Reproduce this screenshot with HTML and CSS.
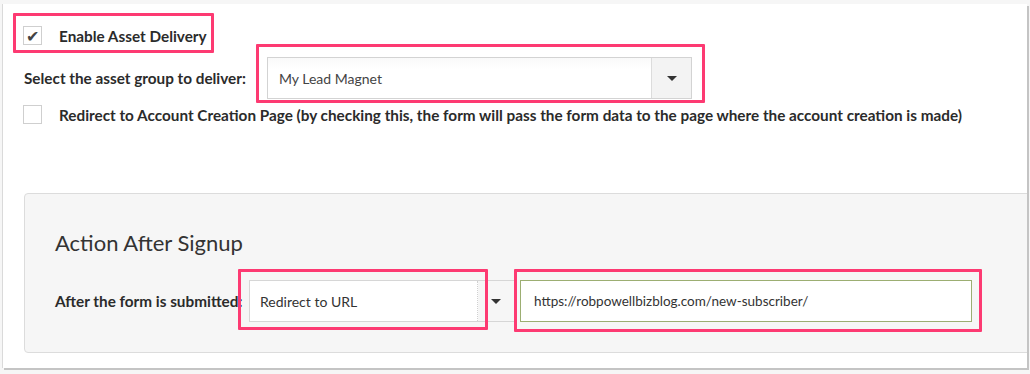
FILE: index.html
```html
<!DOCTYPE html>
<html>
<head>
<meta charset="utf-8">
<link rel="stylesheet" href="styles.css">
</head>
<body>
<div class="panel">
  <div class="row row-enable">
    <div class="hl hl-enable">
      <span class="checkbox checked">&#10004;</span>
      <span class="label">Enable Asset Delivery</span>
    </div>
  </div>
  <div class="row row-group">
    <span class="label label-group">Select the asset group to deliver:</span>
    <div class="hl hl-group">
      <div class="select select-group">
        <span class="select-value">My Lead Magnet</span>
        <span class="select-btn"><span class="caret"></span></span>
      </div>
    </div>
  </div>
  <div class="row row-redirect">
    <span class="checkbox"></span>
    <span class="label">Redirect to Account Creation Page (by checking this, the form will pass the form data to the page where the account creation is made)</span>
  </div>
  <div class="box">
    <h2 class="box-title">Action After Signup</h2>
    <div class="box-row">
      <span class="label label-after">After the form is submitted:</span>
      <div class="hl hl-action">
        <div class="select select-action">
          <span class="select-value">Redirect to URL</span>
          <span class="select-btn plain"><span class="caret"></span></span>
        </div>
      </div>
      <div class="hl hl-url">
        <div class="url-input">https://robpowellbizblog.com/new-subscriber/</div>
      </div>
    </div>
  </div>
</div>
</body>
</html>
```

FILE: styles.css
```css
* { box-sizing: border-box; }
html, body { margin: 0; padding: 0; }
body {
  background: #f6f6f6;
  font-family: "Lato", "Open Sans", sans-serif;
  color: #2e2e2e;
  width: 1030px;
  height: 374px;
  overflow: hidden;
}
.panel {
  margin: 4px 0 0 2px;
  width: 1025px;
  height: 364px;
  background: #fff;
  border-left: 1px solid #dadada;
  box-shadow: 2px 2px 0 #c4c4c4;
  padding: 22px 0 0 20px;
  overflow: hidden;
}
.row { display: flex; align-items: center; }
.label { font-size: 15.3px; font-weight: 700; color: #2b2b2b; white-space: nowrap; }
.hl { position: relative; }
.hl::after {
  content: "";
  position: absolute;
  border: 3px solid #fd3a72;
  border-radius: 1px;
  pointer-events: none;
  z-index: 2;
}
.row-enable { height: 19px; }
.hl-enable { display: flex; align-items: center; }
.hl-enable::after { left: -10px; top: -13px; right: -7px; bottom: -8px; }
.checkbox {
  width: 19px;
  height: 19px;
  border: 1px solid #cfcfcf;
  background: #fff;
  display: flex;
  align-items: center;
  justify-content: center;
  font-size: 16px;
  line-height: 1;
  color: #444;
  flex: none;
}
.checkbox + .label { margin-left: 17px; }
.row-group { margin-top: 12px; height: 42px; }
.label-group { margin-left: 1px; width: 243px; }
.hl-group::after { left: -11px; top: -13px; right: -13px; bottom: -4px; }
.select {
  display: flex;
  height: 42px;
  border: 1px solid #d3d3d3;
  background: #fff;
}
.select-group { width: 425px; }
.select-value {
  flex: 1;
  display: flex;
  align-items: center;
  padding-left: 11px;
  font-size: 14px;
  color: #444;
  background: linear-gradient(#f9f9f9, #fff 30%);
}
.select-btn {
  width: 40px;
  display: flex;
  align-items: center;
  justify-content: center;
  background: #f3f3f3;
  border-left: 1px solid #dcdcdc;
}
.caret {
  width: 0; height: 0;
  border-left: 5px solid transparent;
  border-right: 5px solid transparent;
  border-top: 5px solid #333;
}
.row-redirect { margin-top: 6px; height: 19px; }
.box {
  margin: 69px 0 0 1px;
  width: 1040px;
  height: 160px;
  background: #f6f6f6;
  border: 1px solid #dcdcdc;
  border-radius: 4px;
  padding: 34px 0 0 30px;
}
.box-title {
  margin: 0;
  font-size: 22px;
  line-height: 30px;
  font-weight: 400;
  color: #333;
}
.box-row { display: flex; align-items: center; margin-top: 22px; height: 42px; }
.label-after { width: 194px; }
.select-action { width: 266px; border-color: #d6d6d6; background: #f6f6f6; }
.select-action .select-value { background: #fff; padding-left: 10px; color: #333; border-right: 1px dotted #d0d0d0; }
.select-btn.plain { width: 36px; background: transparent; border-left: none; }
.hl-action::after { left: -11px; top: -11px; right: 27px; bottom: -8px; }
.url-input {
  margin-left: 5px;
  width: 452px;
  height: 42px;
  border: 1px solid #9cae72;
  background: #fff;
  display: flex;
  align-items: center;
  padding-left: 13px;
  font-size: 13.5px;
  color: #333;
}
.hl-url::after { left: -1px; top: -11px; right: -10px; bottom: -10px; }
```
